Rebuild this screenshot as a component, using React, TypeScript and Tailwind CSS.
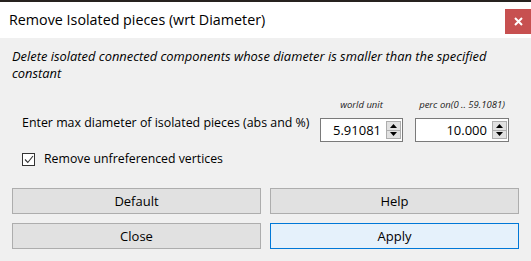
import React from 'react';

function SpinBox({ value, width }: { value: string; width: string }) {
  return (
    <div className={`flex h-[24px] items-center border border-[#7a7a7a] bg-white ${width}`}>
      <div className="flex-1 pr-[5px] text-right text-[13px] leading-none text-black">{value}</div>
      <div className="mr-[1px] flex h-[18px] w-[15px] flex-col border border-[#adadad] bg-[#e1e1e1]">
        <div className="flex flex-1 items-center justify-center border-b border-[#adadad]">
          <svg width="7" height="4" viewBox="0 0 7 4"><path d="M0 4 L3.5 0 L7 4 Z" fill="#000" /></svg>
        </div>
        <div className="flex flex-1 items-center justify-center">
          <svg width="7" height="4" viewBox="0 0 7 4"><path d="M0 0 L3.5 4 L7 0 Z" fill="#000" /></svg>
        </div>
      </div>
    </div>
  );
}

function Btn({ label, primary }: { label: string; primary?: boolean }) {
  return (
    <button
      className={
        primary
          ? 'h-[26px] border border-[#0078d7] bg-[#e5f1fb] text-[13px] leading-none text-black'
          : 'h-[26px] border border-[#adadad] bg-[#e1e1e1] text-[13px] leading-none text-black'
      }
    >
      {label}
    </button>
  );
}

export default function App() {
  return (
    <div className="flex h-[261px] w-[531px] flex-col overflow-hidden font-['Open_Sans',sans-serif]">
      <div className="h-[2px] bg-[#26221f]" />
      <div className="flex h-[36px] items-start justify-between bg-white">
        <div className="pl-[9px] pt-[8px] text-[14.3px] leading-[20px] text-black">Remove Isolated pieces (wrt Diameter)</div>
        <div className="mt-[7px] flex h-[25px] w-[26px] items-center justify-center bg-[#c75050]">
          <svg width="9" height="9" viewBox="0 0 9 9">
            <path d="M1 1 L8 8 M8 1 L1 8" stroke="#fff" strokeWidth="2" />
          </svg>
        </div>
      </div>

      <div className="flex flex-1 flex-col bg-[#f0f0f0] px-[12px]">
        <div className="mt-[10px] text-[12.9px] italic leading-[17px] text-black">
          <div className="whitespace-nowrap">Delete isolated connected components whose diameter is smaller than the specified</div>
          <div>constant</div>
        </div>

        <div className="mt-[17px] flex items-center pl-[10px]">
          <div className="mt-[5px] w-[298px] whitespace-nowrap text-[12.4px] text-black">Enter max diameter of isolated pieces (abs and %)</div>
          <div className="flex flex-col items-center">
            <div className="h-[12px] text-[9.5px] italic leading-[12px] text-[#222]">world unit</div>
            <div className="mt-[7px]">
              <SpinBox value="5.91081" width="w-[83px]" />
            </div>
          </div>
          <div className="ml-[12px] flex flex-col items-center">
            <div className="h-[12px] whitespace-nowrap text-[9.5px] italic leading-[12px] text-[#222]">perc on(0 .. 59.1081)</div>
            <div className="mt-[7px]">
              <SpinBox value="10.000" width="w-[94px]" />
            </div>
          </div>
        </div>

        <div className="mt-[9px] flex h-[16px] items-center pl-[10px]">
          <div className="flex h-[13px] w-[13px] items-center justify-center border border-[#333] bg-white">
            <svg width="10" height="9" viewBox="0 0 10 9">
              <path d="M1 4.5 L3.8 7.5 L9 1" fill="none" stroke="#333" strokeWidth="1.1" />
            </svg>
          </div>
          <span className="ml-[9px] whitespace-nowrap text-[12.3px] text-black">Remove unfreferenced vertices</span>
        </div>

        <div className="mt-[21px] grid grid-cols-2 gap-x-[9px] gap-y-[9px]">
          <Btn label="Default" />
          <Btn label="Help" />
          <Btn label="Close" />
          <Btn label="Apply" primary />
        </div>
      </div>
    </div>
  );
}
